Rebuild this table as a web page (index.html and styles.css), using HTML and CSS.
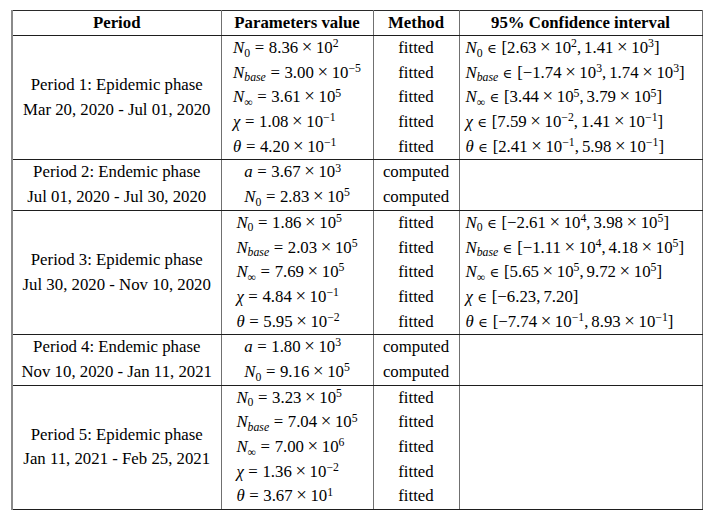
FILE: index.html
```html
<!DOCTYPE html>
<html>
<head>
<meta charset="utf-8">
<link rel="stylesheet" href="styles.css">
</head>
<body>
<table class="tbl">
<colgroup><col class="c1"><col class="c2"><col class="c3"><col class="c4"></colgroup>
<thead>
<tr><th>Period</th><th>Parameters value</th><th>Method</th><th>95% Confidence interval</th></tr>
</thead>
<tbody>
<tr>
<td class="period"><div>Period 1: Epidemic phase</div><div>Mar 20, 2020 - Jul 01, 2020</div></td>
<td class="params"><div class="blk">
<div class="ln"><i>N</i><sub>0</sub><span class="rel">=</span>8.36<span class="op">×</span>10<sup>2</sup></div>
<div class="ln"><i>N</i><sub><i>base</i></sub><span class="rel">=</span>3.00<span class="op">×</span>10<sup>−5</sup></div>
<div class="ln"><i>N</i><sub>∞</sub><span class="rel">=</span>3.61<span class="op">×</span>10<sup>5</sup></div>
<div class="ln"><i>χ</i><span class="rel">=</span>1.08<span class="op">×</span>10<sup>−1</sup></div>
<div class="ln"><i>θ</i><span class="rel">=</span>4.20<span class="op">×</span>10<sup>−1</sup></div>
</div></td>
<td class="method"><div class="ln">fitted</div><div class="ln">fitted</div><div class="ln">fitted</div><div class="ln">fitted</div><div class="ln">fitted</div></td>
<td class="ci">
<div class="ln"><i>N</i><sub>0</sub><span class="in">∈</span>[2.63<span class="op">×</span>10<sup>2</sup>,<span class="th"></span>1.41<span class="op">×</span>10<sup>3</sup>]</div>
<div class="ln"><i>N</i><sub><i>base</i></sub><span class="in">∈</span>[−1.74<span class="op">×</span>10<sup>3</sup>,<span class="th"></span>1.74<span class="op">×</span>10<sup>3</sup>]</div>
<div class="ln"><i>N</i><sub>∞</sub><span class="in">∈</span>[3.44<span class="op">×</span>10<sup>5</sup>,<span class="th"></span>3.79<span class="op">×</span>10<sup>5</sup>]</div>
<div class="ln"><i>χ</i><span class="in">∈</span>[7.59<span class="op">×</span>10<sup>−2</sup>,<span class="th"></span>1.41<span class="op">×</span>10<sup>−1</sup>]</div>
<div class="ln"><i>θ</i><span class="in">∈</span>[2.41<span class="op">×</span>10<sup>−1</sup>,<span class="th"></span>5.98<span class="op">×</span>10<sup>−1</sup>]</div>
</td>
</tr>
<tr>
<td class="period"><div>Period 2: Endemic phase</div><div>Jul 01, 2020 - Jul 30, 2020</div></td>
<td class="params"><div class="blk">
<div class="ln"><i>a</i><span class="rel">=</span>3.67<span class="op">×</span>10<sup>3</sup></div>
<div class="ln"><i>N</i><sub>0</sub><span class="rel">=</span>2.83<span class="op">×</span>10<sup>5</sup></div>
</div></td>
<td class="method"><div class="ln">computed</div><div class="ln">computed</div></td>
<td class="ci"></td>
</tr>
<tr>
<td class="period"><div>Period 3: Epidemic phase</div><div>Jul 30, 2020 - Nov 10, 2020</div></td>
<td class="params"><div class="blk">
<div class="ln"><i>N</i><sub>0</sub><span class="rel">=</span>1.86<span class="op">×</span>10<sup>5</sup></div>
<div class="ln"><i>N</i><sub><i>base</i></sub><span class="rel">=</span>2.03<span class="op">×</span>10<sup>5</sup></div>
<div class="ln"><i>N</i><sub>∞</sub><span class="rel">=</span>7.69<span class="op">×</span>10<sup>5</sup></div>
<div class="ln"><i>χ</i><span class="rel">=</span>4.84<span class="op">×</span>10<sup>−1</sup></div>
<div class="ln"><i>θ</i><span class="rel">=</span>5.95<span class="op">×</span>10<sup>−2</sup></div>
</div></td>
<td class="method"><div class="ln">fitted</div><div class="ln">fitted</div><div class="ln">fitted</div><div class="ln">fitted</div><div class="ln">fitted</div></td>
<td class="ci">
<div class="ln"><i>N</i><sub>0</sub><span class="in">∈</span>[−2.61<span class="op">×</span>10<sup>4</sup>,<span class="th"></span>3.98<span class="op">×</span>10<sup>5</sup>]</div>
<div class="ln"><i>N</i><sub><i>base</i></sub><span class="in">∈</span>[−1.11<span class="op">×</span>10<sup>4</sup>,<span class="th"></span>4.18<span class="op">×</span>10<sup>5</sup>]</div>
<div class="ln"><i>N</i><sub>∞</sub><span class="in">∈</span>[5.65<span class="op">×</span>10<sup>5</sup>,<span class="th"></span>9.72<span class="op">×</span>10<sup>5</sup>]</div>
<div class="ln"><i>χ</i><span class="in">∈</span>[−6.23,<span class="th"></span>7.20]</div>
<div class="ln"><i>θ</i><span class="in">∈</span>[−7.74<span class="op">×</span>10<sup>−1</sup>,<span class="th"></span>8.93<span class="op">×</span>10<sup>−1</sup>]</div>
</td>
</tr>
<tr>
<td class="period"><div>Period 4: Endemic phase</div><div>Nov 10, 2020 - Jan 11, 2021</div></td>
<td class="params"><div class="blk">
<div class="ln"><i>a</i><span class="rel">=</span>1.80<span class="op">×</span>10<sup>3</sup></div>
<div class="ln"><i>N</i><sub>0</sub><span class="rel">=</span>9.16<span class="op">×</span>10<sup>5</sup></div>
</div></td>
<td class="method"><div class="ln">computed</div><div class="ln">computed</div></td>
<td class="ci"></td>
</tr>
<tr>
<td class="period"><div>Period 5: Epidemic phase</div><div>Jan 11, 2021 - Feb 25, 2021</div></td>
<td class="params"><div class="blk">
<div class="ln"><i>N</i><sub>0</sub><span class="rel">=</span>3.23<span class="op">×</span>10<sup>5</sup></div>
<div class="ln"><i>N</i><sub><i>base</i></sub><span class="rel">=</span>7.04<span class="op">×</span>10<sup>5</sup></div>
<div class="ln"><i>N</i><sub>∞</sub><span class="rel">=</span>7.00<span class="op">×</span>10<sup>6</sup></div>
<div class="ln"><i>χ</i><span class="rel">=</span>1.36<span class="op">×</span>10<sup>−2</sup></div>
<div class="ln"><i>θ</i><span class="rel">=</span>3.67<span class="op">×</span>10<sup>1</sup></div>
</div></td>
<td class="method"><div class="ln">fitted</div><div class="ln">fitted</div><div class="ln">fitted</div><div class="ln">fitted</div><div class="ln">fitted</div></td>
<td class="ci"></td>
</tr>
</tbody>
</table>
</body>
</html>
```
FILE: styles.css
```css
html, body {
  margin: 0;
  padding: 0;
  background: #fff;
}
body {
  padding: 10px 0 0 11px;
  font-family: "Liberation Serif", "DejaVu Serif", serif;
  font-size: 16.8px;
  color: #000;
}
.tbl {
  border-collapse: collapse;
  table-layout: fixed;
  width: 690px;
  border-top: 1px solid #2a2a2a;
  border-bottom: 1px solid #2a2a2a;
  border-left: 2px solid #8a8a8a;
  border-right: 1px solid #6a6a6a;
}
.c1 { width: 209px; }
.c2 { width: 152px; }
.c3 { width: 86px; }
.c4 { width: 243px; }
th, td {
  padding: 0;
  border-left: 1px solid #707070;
  border-right: 1px solid #707070;
  border-bottom: 1px solid #1e1e1e;
  line-height: 24.7px;
}
th {
  font-weight: bold;
  text-align: center;
  height: 24px;
  line-height: 24px;
}
td { vertical-align: top; }
.period {
  text-align: center;
  vertical-align: middle;
}
.params { text-align: center; }
.blk {
  display: inline-block;
  text-align: left;
}
.method { text-align: center; }
.ci { padding-left: 6px; white-space: nowrap; }
.ln { height: 24.7px; white-space: nowrap; }
sub, sup {
  font-size: 0.7em;
  line-height: 0;
  position: relative;
  vertical-align: baseline;
}
sub { top: 0.3em; }
sup { top: -0.5em; }
.rel { margin: 0 4.6px; }
.in {
  font-family: "DejaVu Serif", serif;
  font-size: 0.78em;
  margin: 0 4.6px;
}
.op {
  font-size: 1.12em;
  line-height: 0;
  margin: 0 3.6px;
}
.th { display: inline-block; width: 3px; }
```
